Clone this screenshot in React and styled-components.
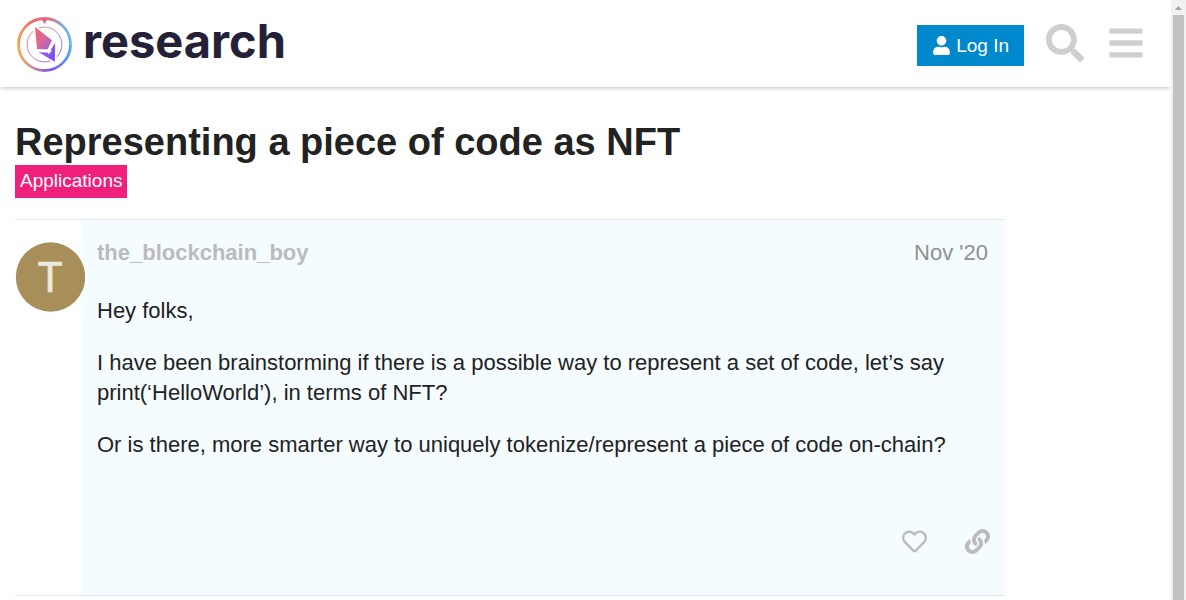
import React from "react";
import styled, { createGlobalStyle } from "styled-components";
import { FaUser, FaSearch, FaBars, FaRegHeart, FaLink } from "react-icons/fa";

const GlobalStyle = createGlobalStyle`
  *, *::before, *::after { box-sizing: border-box; }
  body {
    margin: 0;
    background: #fff;
    color: #222;
    font-family: "Liberation Sans", Arial, Helvetica, sans-serif;
    font-size: 22px;
    line-height: 30px;
  }
  h1, h2, p { margin: 0; }
  a { color: inherit; text-decoration: none; }
  button { font-family: inherit; border: 0; cursor: pointer; }
`;

const Shell = styled.div`
  display: flex;
  height: 100vh;
  overflow: hidden;
`;

const Page = styled.div`
  flex: 1;
  min-width: 0;
  overflow: hidden;
`;

const Header = styled.header`
  display: flex;
  align-items: center;
  justify-content: space-between;
  height: 87px;
  padding: 0 15px 0 16px;
  background: #fff;
  box-shadow: 0 2px 4px -1px rgba(0, 0, 0, 0.25);
`;

const Brand = styled.a`
  display: flex;
  align-items: center;
  gap: 10px;
  padding-top: 1px;
`;

const BrandName = styled.span`
  color: #242038;
  font-family: Inter, sans-serif;
  font-size: 47px;
  font-weight: 700;
  line-height: 56px;
  padding-bottom: 6px;
`;

const HeaderActions = styled.nav`
  display: flex;
  align-items: center;
  padding-bottom: 1px;
`;

const LoginButton = styled.button`
  display: flex;
  align-items: center;
  gap: 5px;
  height: 41px;
  margin: 5px 10px 0 0;
  padding: 0 15px;
  background: #0088cc;
  color: #fff;
  font-size: 19px;
`;

const HeaderIcon = styled.button`
  display: flex;
  align-items: center;
  justify-content: center;
  width: 61px;
  height: 61px;
  padding: 0;
  background: none;
  color: #cfcfcf;
  font-size: 38px;
`;

const Content = styled.main`
  padding: 32px 15px 0;
`;

const Title = styled.h1`
  font-size: 38px;
  line-height: 46px;
`;

const Category = styled.a`
  display: block;
  width: fit-content;
  padding: 0 5px 1px;
  background: #ee207b;
  font-size: 19px;
  line-height: 32px;

  && { color: #fff; }
`;

const Post = styled.article`
  display: flex;
  max-width: 989px;
  margin-top: 21px;
  border-top: 1px solid #e3e7e8;
  border-bottom: 1px solid #e3e7e8;
`;

const AvatarColumn = styled.div`
  flex: none;
  width: 66px;
  padding-top: 22px;
`;

const Avatar = styled.a`
  position: relative;
  display: block;
  width: 70px;
  height: 70px;

  svg { display: block; }
`;

const PostBody = styled.div`
  flex: 1;
  min-width: 0;
  padding: 18px 16px 30px;
  background: #f4fcff;
`;

const PostMeta = styled.div`
  display: flex;
  justify-content: space-between;
  margin-bottom: 28px;
`;

const Author = styled.a`
  font-weight: 700;

  && { color: #bbb; }
`;

const PostDate = styled.a`
  && { color: #919191; }
`;

const Cooked = styled.div`
  display: flex;
  flex-direction: column;
  gap: 22px;
`;

const PostActions = styled.div`
  display: flex;
  justify-content: flex-end;
  gap: 14px;
  margin: 57px -14px 0 0;
`;

const PostAction = styled.button`
  display: flex;
  align-items: center;
  justify-content: center;
  width: 49px;
  height: 48px;
  padding: 0;
  background: none;
  color: #bbb;
  font-size: 25px;
`;

const ScrollTrack = styled.div`
  display: flex;
  flex: none;
  flex-direction: column;
  align-items: center;
  width: 15px;
  background: #f1f1f1;
`;

const ScrollArrow = styled.svg`
  display: block;
  flex: none;
`;

const ScrollThumb = styled.div`
  flex: 1;
  width: 11px;
  background: #c1c1c1;
`;

function Emblem() {
  return (
    <svg width="57" height="57" viewBox="0 0 57 57" aria-hidden="true">
      <defs>
        <linearGradient id="ringTop" x1="0" y1="0" x2="1" y2="0">
          <stop offset="0" stopColor="#f39a55" />
          <stop offset="0.3" stopColor="#f1646a" />
          <stop offset="0.6" stopColor="#d8718f" />
          <stop offset="0.85" stopColor="#88a9d8" />
          <stop offset="1" stopColor="#5cb9f2" />
        </linearGradient>
        <linearGradient id="ringBottom" x1="0" y1="0" x2="1" y2="0">
          <stop offset="0" stopColor="#f2ac57" />
          <stop offset="0.28" stopColor="#cf8a9c" />
          <stop offset="0.6" stopColor="#7a50ef" />
          <stop offset="1" stopColor="#53a7f8" />
        </linearGradient>
        <linearGradient id="innerRing" x1="0" y1="0" x2="1" y2="1">
          <stop offset="0" stopColor="#f4706a" />
          <stop offset="0.5" stopColor="#c07bc0" />
          <stop offset="1" stopColor="#7755f5" />
        </linearGradient>
        <linearGradient id="gem" x1="0" y1="0.1" x2="1" y2="0.9">
          <stop offset="0" stopColor="#f4626c" />
          <stop offset="0.5" stopColor="#d7699a" />
          <stop offset="1" stopColor="#9b65d8" />
        </linearGradient>
        <linearGradient id="shard" x1="0" y1="0" x2="1" y2="1">
          <stop offset="0" stopColor="#b764cf" />
          <stop offset="1" stopColor="#6a4cff" />
        </linearGradient>
      </defs>
      <path d="M2.5 28.5a26 26 0 0 1 52 0" fill="none" stroke="url(#ringTop)" strokeWidth="2.8" />
      <path d="M2.5 28.5a26 26 0 0 0 52 0" fill="none" stroke="url(#ringBottom)" strokeWidth="2.8" />
      <path d="M25.5 3h6l-3 5z" fill="#e3617d" />
      <circle cx="28.5" cy="28.5" r="17.4" fill="none" stroke="url(#innerRing)" strokeWidth="0.9" />
      <path d="M18 9 37.5 24 32 34 19.5 34z" fill="#fff" stroke="#fff" strokeWidth="2" />
      <path d="M39.5 46 22 37 40 25z" fill="#fff" stroke="#fff" strokeWidth="2" />
      <path d="M19 11 36 24.3 31.6 33.4 21 33z" fill="url(#gem)" />
      <path d="M22.8 36.3 32.8 36.6 39.2 27 38.8 45.8z" fill="url(#shard)" />
      <path d="M30.5 33.4 36 34.5 32.5 38.5z" fill="#fff" />
    </svg>
  );
}

function LetterAvatar() {
  return (
    <svg width="70" height="70" viewBox="0 0 70 70" aria-hidden="true">
      <circle cx="35.5" cy="35" r="34.7" fill="#a88f59" />
      <text
        x="35"
        y="50"
        textAnchor="middle"
        fill="#eee8dc"
        stroke="#eee8dc"
        strokeWidth="0.7"
        fontFamily="Roboto, sans-serif"
        fontSize="42"
      >
        T
      </text>
    </svg>
  );
}

export default function App() {
  return (
    <>
      <GlobalStyle />
      <Shell>
        <Page>
          <Header>
            <Brand href="#home">
              <Emblem />
              <BrandName>research</BrandName>
            </Brand>
            <HeaderActions>
              <LoginButton type="button">
                <FaUser aria-hidden="true" />
                Log In
              </LoginButton>
              <HeaderIcon type="button" aria-label="Search">
                <FaSearch />
              </HeaderIcon>
              <HeaderIcon type="button" aria-label="Menu">
                <FaBars />
              </HeaderIcon>
            </HeaderActions>
          </Header>
          <Content>
            <Title>Representing a piece of code as NFT</Title>
            <Category href="#applications">Applications</Category>
            <Post>
              <AvatarColumn>
                <Avatar href="#author" aria-label="the_blockchain_boy">
                  <LetterAvatar />
                </Avatar>
              </AvatarColumn>
              <PostBody>
                <PostMeta>
                  <Author href="#author">the_blockchain_boy</Author>
                  <PostDate href="#post-1">Nov '20</PostDate>
                </PostMeta>
                <Cooked>
                  <p>Hey folks,</p>
                  <p>
                    I have been brainstorming if there is a possible way to represent a set of
                    code, let’s say print(‘HelloWorld’), in terms of NFT?
                  </p>
                  <p>
                    Or is there, more smarter way to uniquely tokenize/represent a piece of code
                    on-chain?
                  </p>
                </Cooked>
                <PostActions>
                  <PostAction type="button" aria-label="Like this post">
                    <FaRegHeart />
                  </PostAction>
                  <PostAction type="button" aria-label="Copy a link to this post">
                    <FaLink />
                  </PostAction>
                </PostActions>
              </PostBody>
            </Post>
          </Content>
        </Page>
        <ScrollTrack aria-hidden="true">
          <ScrollArrow width="15" height="15" viewBox="0 0 15 15">
            <path d="M4 10 7.5 6 11 10z" fill="#a3a3a3" />
          </ScrollArrow>
          <ScrollThumb />
        </ScrollTrack>
      </Shell>
    </>
  );
}
